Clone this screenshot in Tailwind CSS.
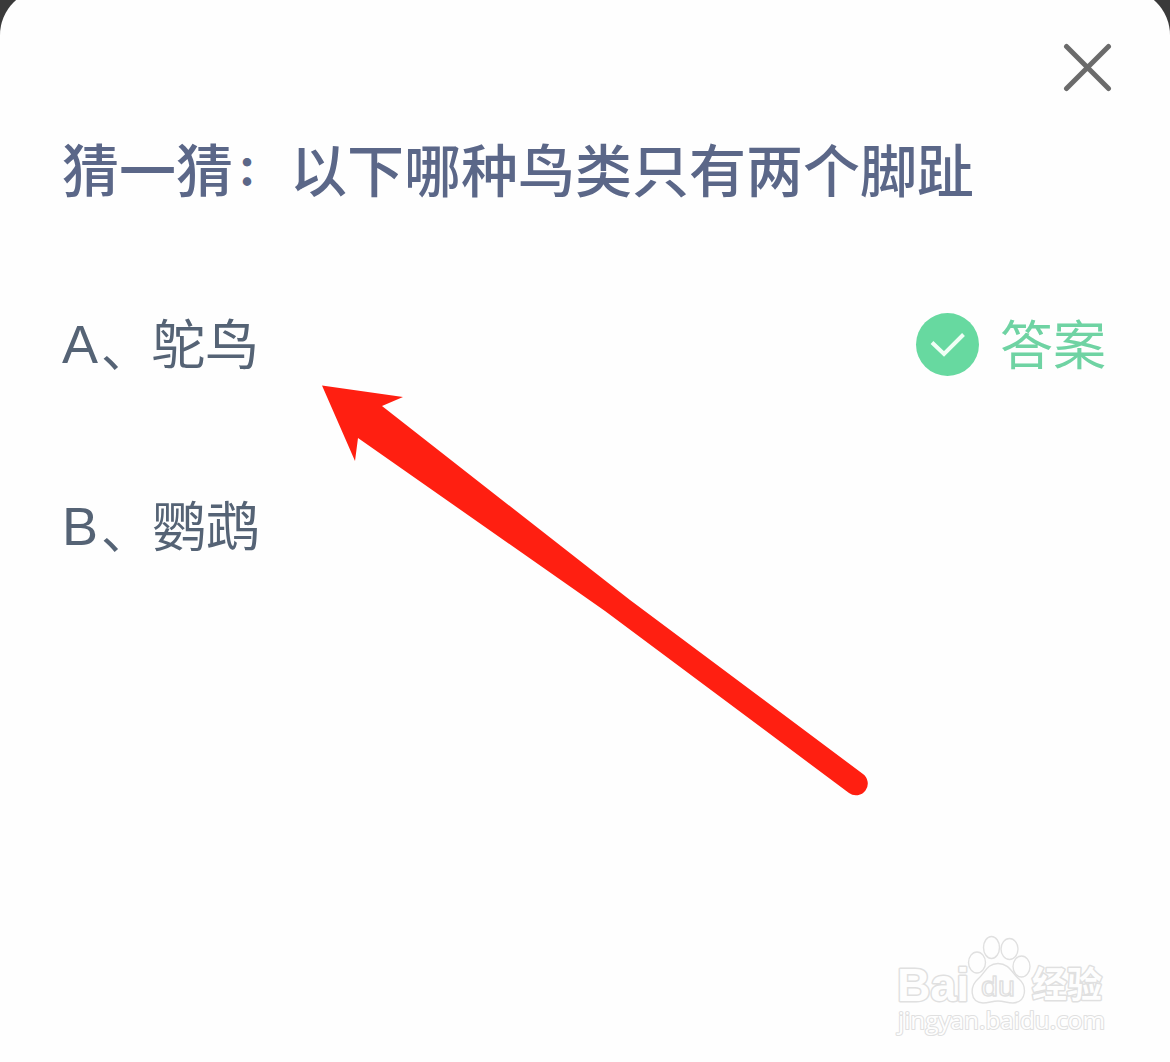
<!DOCTYPE html>
<html lang="zh-CN">
<head>
  <meta charset="UTF-8">
  <meta name="viewport" content="width=device-width, initial-scale=1.0">
  <title>猜一猜</title>
  <script src="https://cdn.jsdelivr.net/npm/@tailwindcss/browser@4"></script>
</head>
<body class="bg-[#3a3a3a] h-[1062px] overflow-hidden font-['Noto_Sans_CJK_SC',sans-serif]">
  <main class="relative -mt-[11px] h-[1073px] bg-[#fefefe] rounded-t-[46px] pl-[62px] pr-[64px] pt-[54px]">
    <div class="flex justify-end -mr-[6px]">
      <button type="button" aria-label="关闭">
        <svg class="block w-[49px] h-[49px]" viewBox="0 0 49 49" fill="none" stroke="#6b6b6b" stroke-width="5" stroke-linecap="round">
          <path d="M3.500 3.500 45.500 45.500M45.500 3.500 3.500 45.500"/>
        </svg>
      </button>
    </div>

    <h1 class="flex mt-[34px] h-[82px] leading-[82px] text-[57px] font-medium text-[#5b6788] whitespace-nowrap">
      <span>猜一猜</span>
      <span class="w-[57px] pl-[4px] pt-px text-[40px] font-black">：</span>
      <span>以下哪种鸟类只有两个脚趾</span>
    </h1>

    <ul class="mt-[96px] text-[54px] leading-[80px] text-[#556375]">
      <li class="flex items-center justify-between h-[80px]">
        <span class="flex">
          <span class="w-[39px] pt-px font-['Liberation_Sans',sans-serif]">A</span>
          <span class="w-[50px] pt-[2px] text-[50px]">、</span>
          <span class="-mt-px">鸵鸟</span>
        </span>
        <span class="flex items-center gap-[21px] text-[#6fd3a3]">
          <svg class="w-[64px] h-[64px]" viewBox="0 0 64 64" fill="none">
            <circle cx="32.500" cy="32.500" r="31.500" fill="#67d9a0"/>
            <path d="M17 30.500 29 42 48.500 22.500" stroke="#effff5" stroke-width="4"/>
          </svg>
          <span class="-mt-[5px] text-[53px]">答案</span>
        </span>
      </li>
      <li class="flex mt-[101px] h-[80px]">
        <span class="w-[39px] pt-px font-['Liberation_Sans',sans-serif]">B</span>
        <span class="w-[51px] pt-[2px] text-[50px]">、</span>
        <span class="-mt-px">鹦鹉</span>
      </li>
    </ul>

    <!-- pointer to the right answer -->
    <svg class="absolute left-[310px] top-[386px] w-[570px] h-[430px]" viewBox="310 375 570 430" fill="#ff1f11">
      <path d="M322 385.500 403 397 382 406 630 600 863 774A11.500 11.500 0 0 1 849 793L605 611 358 438 355 461Z"/>
    </svg>

    <!-- watermark -->
    <svg class="absolute left-[880px] top-[931px] w-[250px] h-[130px]" viewBox="880 920 250 130" fill="#fefefe" stroke="#e0e0e0" stroke-width="1.400" stroke-linejoin="round">
      <text x="897" y="1001" font-size="46" font-weight="700" stroke-width="3" paint-order="stroke" font-family="Liberation Sans, sans-serif" textLength="72" lengthAdjust="spacingAndGlyphs">Bai</text>
      <ellipse cx="977" cy="962.500" rx="8.500" ry="10.500"/>
      <ellipse cx="991.500" cy="947.500" rx="8" ry="11"/>
      <ellipse cx="1009.500" cy="949" rx="8.500" ry="10.500"/>
      <ellipse cx="1021.500" cy="966.500" rx="8.500" ry="10.500"/>
      <path d="M998 963.500C1009 963.500 1012 973 1019 979C1027 986 1027 1002 1013 1003C1007 1003 1004 1001 998 1001C992 1001 989 1003 983 1003C969 1002 970 986 978 979C985 973 987 963.500 998 963.500Z"/>
      <text x="981" y="996" font-size="28" font-family="Liberation Sans, sans-serif" textLength="34" lengthAdjust="spacingAndGlyphs">du</text>
      <text x="1032" y="998" font-size="36" font-weight="700" stroke-width="3" paint-order="stroke" font-family="Noto Sans CJK SC, sans-serif" textLength="70" lengthAdjust="spacingAndGlyphs">经验</text>
      <text x="898" y="1029" font-size="23" stroke-width="2" paint-order="stroke" font-family="Open Sans, sans-serif" textLength="207" lengthAdjust="spacingAndGlyphs">jingyan.baidu.com</text>
    </svg>
  </main>
</body>
</html>
